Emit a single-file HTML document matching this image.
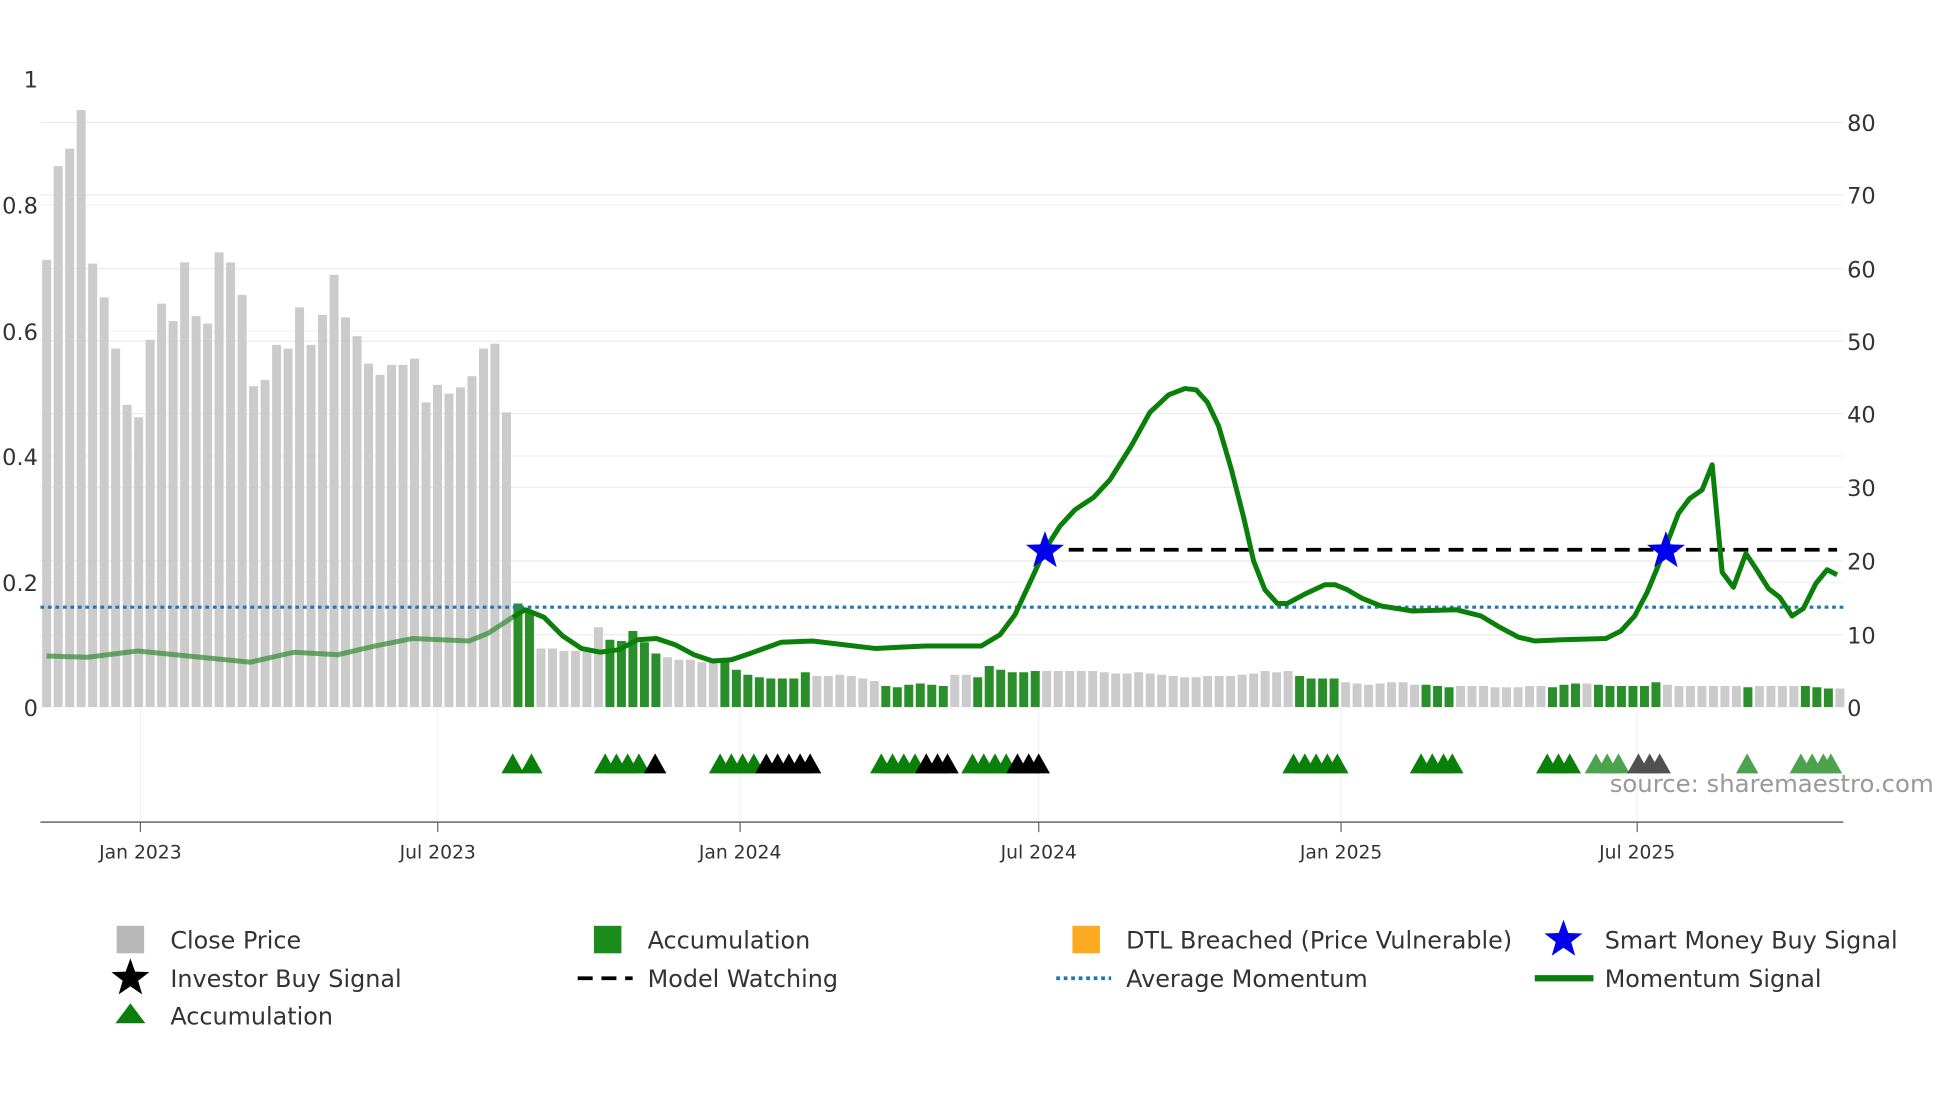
<!DOCTYPE html>
<html><head><meta charset="utf-8"><style>html,body{margin:0;padding:0;background:#fff}svg{display:block}text{font-family:"DejaVu Sans","Liberation Sans",sans-serif;fill:#333}</style></head><body>
<svg width="1960" height="1102" viewBox="0 0 1568 882" xmlns="http://www.w3.org/2000/svg">
<g stroke="#ebebeb" stroke-width="1">
<path d="M32 98H1475M32 156H1475M32 215H1475M32 273H1475M32 331H1475M32 390H1475M32 449H1475M32 508H1475"/>
<path d="M32 164H1475M32 265H1475M32 365H1475M32 466H1475" stroke="#f3f3f3"/>
<path d="M112 566V658M350 566V658M592 566V658M831 566V658M1073 566V658M1310 566V658" stroke="#f2f2f2"/>
</g>
<g font-size="18">
<text x="30" y="70" text-anchor="end">1</text>
<text x="30" y="171" text-anchor="end">0.8</text>
<text x="30" y="272" text-anchor="end">0.6</text>
<text x="30" y="372" text-anchor="end">0.4</text>
<text x="30" y="473" text-anchor="end">0.2</text>
<text x="30" y="573" text-anchor="end">0</text>
<text x="1478" y="105">80</text><text x="1478" y="163">70</text><text x="1478" y="222">60</text><text x="1478" y="280">50</text><text x="1478" y="338">40</text><text x="1478" y="397">30</text><text x="1478" y="456">20</text><text x="1478" y="515">10</text><text x="1478" y="573">0</text>
</g>
<path fill="none" stroke="#c8c8c8" stroke-width="7.2" opacity="0.95" d="M37 566V208M46.2 566V133M55.4 566V119M64.6 566V88M73.8 566V211M83 566V238M92.2 566V279M101.4 566V324M110.6 566V334M119.8 566V272M129 566V243M138.2 566V257M147.4 566V210M156.6 566V253M165.8 566V259M175 566V202M184.2 566V210M193.4 566V236M202.6 566V309M211.8 566V304M221 566V276M230.2 566V279M239.4 566V246M248.6 566V276M257.8 566V252M267 566V220M276.2 566V254M285.4 566V269M294.6 566V291M303.8 566V300M313 566V292M322.2 566V292M331.4 566V287M340.6 566V322M349.8 566V308M359 566V315M368.2 566V310M377.4 566V301M386.6 566V279M395.8 566V275M405 566V330
M432.6 566V519M441.8 566V519M451 566V521M460.2 566V521M469.4 566V520M478.6 566V502M533.8 566V526M543 566V528M552.2 566V528M561.4 566V530M570.6 566V528M653.4 566V541M662.6 566V541M671.8 566V540M681 566V541M690.2 566V543M699.4 566V545M763.8 566V540M773 566V540
M837.4 566V537M846.6 566V537M855.8 566V537M865 566V537M874.2 566V537M883.4 566V538M892.6 566V539M901.8 566V539M911 566V538M920.2 566V539M929.4 566V540M938.6 566V541M947.8 566V542M957 566V542M966.2 566V541M975.4 566V541M984.6 566V541M993.8 566V540M1003 566V539M1012.2 566V537M1021.4 566V538M1030.6 566V537
M1076.6 566V546M1085.8 566V547M1095 566V548M1104.2 566V547M1113.4 566V546M1122.6 566V546M1131.8 566V548M1168.6 566V549M1177.8 566V549M1187 566V549M1196.2 566V550M1205.4 566V550M1214.6 566V550M1223.8 566V549M1233 566V549M1269.8 566V547M1334.2 566V548M1343.4 566V549M1352.6 566V549M1361.8 566V549M1371 566V549M1380.2 566V549M1389.4 566V549M1407.8 566V549M1417 566V549M1426.2 566V549M1435.4 566V549M1472.2 566V551"/>
<path d="M37 525L70 526L110 521L150 525L200 530L235 522L270 524L300 517L330 511L375 513L390 507L410 494" fill="none" stroke="#3c8f3c" stroke-width="4" opacity="0.75"/>
<path fill="none" stroke="#2a8f2a" stroke-width="7.2" d="M414.2 566V483M423.4 566V489M487.8 566V512M497 566V513M506.2 566V505M515.4 566V514M524.6 566V523M579.8 566V530M589 566V536M598.2 566V540M607.4 566V542M616.6 566V543M625.8 566V543M635 566V543M644.2 566V538M708.6 566V549M717.8 566V550M727 566V548M736.2 566V547M745.4 566V548M754.6 566V549M782.2 566V542M791.4 566V533M800.6 566V536M809.8 566V538M819 566V538M828.2 566V537M1039.8 566V541M1049 566V543M1058.2 566V543M1067.4 566V543M1141 566V548M1150.2 566V549M1159.4 566V550M1242.2 566V550M1251.4 566V548M1260.6 566V547M1279 566V548M1288.2 566V549M1297.4 566V549M1306.6 566V549M1315.8 566V549M1325 566V546M1398.6 566V550M1444.6 566V549M1453.8 566V550M1463 566V551"/>
<path d="M32 486H1475" stroke="#1f77b4" stroke-width="2.5" stroke-dasharray="3 3"/>
<path d="M855 440H1470" stroke="#000" stroke-width="3" stroke-dasharray="12 7"/>
<path d="M410 494L420 488L435 494L450 509L465 519L480 522L495 520L510 512L525 511L540 516L555 524L570 529L585 528L600 523L625 514L650 513L675 516L700 519L740 517L770 517L785 517L800 508L812 492L825 464L836 440L848 421L860 408L875 398L888 384L905 357L920 330L935 316L948 311L957 312L966 322L975 341L985 375L995 414L1003 449L1012 472L1022 483L1030 483L1045 475L1060 468L1068 468L1078 472L1090 479L1105 485L1130 489L1165 488L1185 493L1200 502L1215 510L1228 513L1250 512L1285 511L1297 505L1308 493L1318 474L1330 445L1343 411L1352 399L1362 392L1370 372L1378 458L1387 470L1397 443L1405 455L1415 471L1424 478L1434 493L1443 487L1453 467L1462 456L1470 460" fill="none" stroke="#0a800a" stroke-width="4" stroke-linejoin="round"/>
<defs><polygon id="st" points="0,-16 3.8,-5.3 15.2,-4.9 6.2,2 9.4,12.9 0,6.5 -9.4,12.9 -6.2,2 -15.2,-4.9 -3.8,-5.3"/><polygon id="tr" points="-9,8 0,-8 9,8"/></defs>
<use href="#st" x="836" y="441" fill="#0000ee"/>
<use href="#st" x="1333" y="441" fill="#0000ee"/>
<g fill="#0a800a">
<use href="#tr" x="410" y="611"/><use href="#tr" x="425" y="611"/>
<use href="#tr" x="484" y="611"/><use href="#tr" x="493" y="611"/><use href="#tr" x="502" y="611"/><use href="#tr" x="511" y="611"/>
<use href="#tr" x="576" y="611"/><use href="#tr" x="585" y="611"/><use href="#tr" x="594" y="611"/><use href="#tr" x="603" y="611"/>
<use href="#tr" x="705" y="611"/><use href="#tr" x="714" y="611"/><use href="#tr" x="723" y="611"/><use href="#tr" x="732" y="611"/>
<use href="#tr" x="778" y="611"/><use href="#tr" x="787" y="611"/><use href="#tr" x="796" y="611"/><use href="#tr" x="805" y="611"/>
<use href="#tr" x="1035" y="611"/><use href="#tr" x="1044" y="611"/><use href="#tr" x="1053" y="611"/><use href="#tr" x="1062" y="611"/><use href="#tr" x="1070" y="611"/>
<use href="#tr" x="1137" y="611"/><use href="#tr" x="1146" y="611"/><use href="#tr" x="1155" y="611"/><use href="#tr" x="1162" y="611"/>
<use href="#tr" x="1238" y="611"/><use href="#tr" x="1247" y="611"/><use href="#tr" x="1256" y="611"/>
</g>
<g fill="#2f922f" opacity="0.85">
<use href="#tr" x="1277" y="611"/><use href="#tr" x="1286" y="611"/><use href="#tr" x="1295" y="611"/><use href="#tr" x="1398" y="611"/>
<use href="#tr" x="1441" y="611"/><use href="#tr" x="1450" y="611"/><use href="#tr" x="1459" y="611"/><use href="#tr" x="1465" y="611"/>
</g>
<g fill="#000">
<use href="#tr" x="524" y="611"/>
<use href="#tr" x="613" y="611"/><use href="#tr" x="622" y="611"/><use href="#tr" x="631" y="611"/><use href="#tr" x="640" y="611"/><use href="#tr" x="648" y="611"/>
<use href="#tr" x="741" y="611"/><use href="#tr" x="750" y="611"/><use href="#tr" x="758" y="611"/>
<use href="#tr" x="814" y="611"/><use href="#tr" x="823" y="611"/><use href="#tr" x="831" y="611"/>
</g>
<g fill="#333" opacity="0.85"><use href="#tr" x="1311" y="611"/><use href="#tr" x="1320" y="611"/><use href="#tr" x="1328" y="611"/></g>
<text x="1288" y="634" font-size="19.5" style="fill:#999">source: sharemaestro.com</text>
<path d="M32 658H1475" stroke="#666" stroke-width="1.2"/>
<path d="M112 658v8M350 658v8M592 658v8M831 658v8M1073 658v8M1310 658v8" stroke="#666"/>
<g font-size="15" text-anchor="middle">
<text x="112" y="687">Jan 2023</text><text x="350" y="687">Jul 2023</text><text x="592" y="687">Jan 2024</text><text x="831" y="687">Jul 2024</text><text x="1073" y="687">Jan 2025</text><text x="1310" y="687">Jul 2025</text>
</g>
<g font-size="19.1">
<rect x="93" y="741" width="22" height="22" fill="#b8b8b8"/><text x="136" y="759">Close Price</text>
<rect x="475" y="741" width="22" height="22" fill="#1a8c1a"/><text x="518" y="759">Accumulation</text>
<rect x="858" y="741" width="22" height="22" fill="#fbaa22"/><text x="901" y="759">DTL Breached (Price Vulnerable)</text>
<use href="#st" x="1251" y="752" fill="#0000ee"/><text x="1284" y="759">Smart Money Buy Signal</text>
<use href="#st" x="104" y="783" fill="#000"/><text x="136" y="790">Investor Buy Signal</text>
<path d="M462 783H506" stroke="#000" stroke-width="3" stroke-dasharray="12 7"/><text x="518" y="790">Model Watching</text>
<path d="M845 783H889" stroke="#1f77b4" stroke-width="3" stroke-dasharray="3 3"/><text x="901" y="790">Average Momentum</text>
<path d="M1228 783H1275" stroke="#0a800a" stroke-width="5"/><text x="1284" y="790">Momentum Signal</text>
<polygon points="92,819 104,803 116,819" fill="#0a800a"/><text x="136" y="820">Accumulation</text>
</g>
</svg>
</body></html>
